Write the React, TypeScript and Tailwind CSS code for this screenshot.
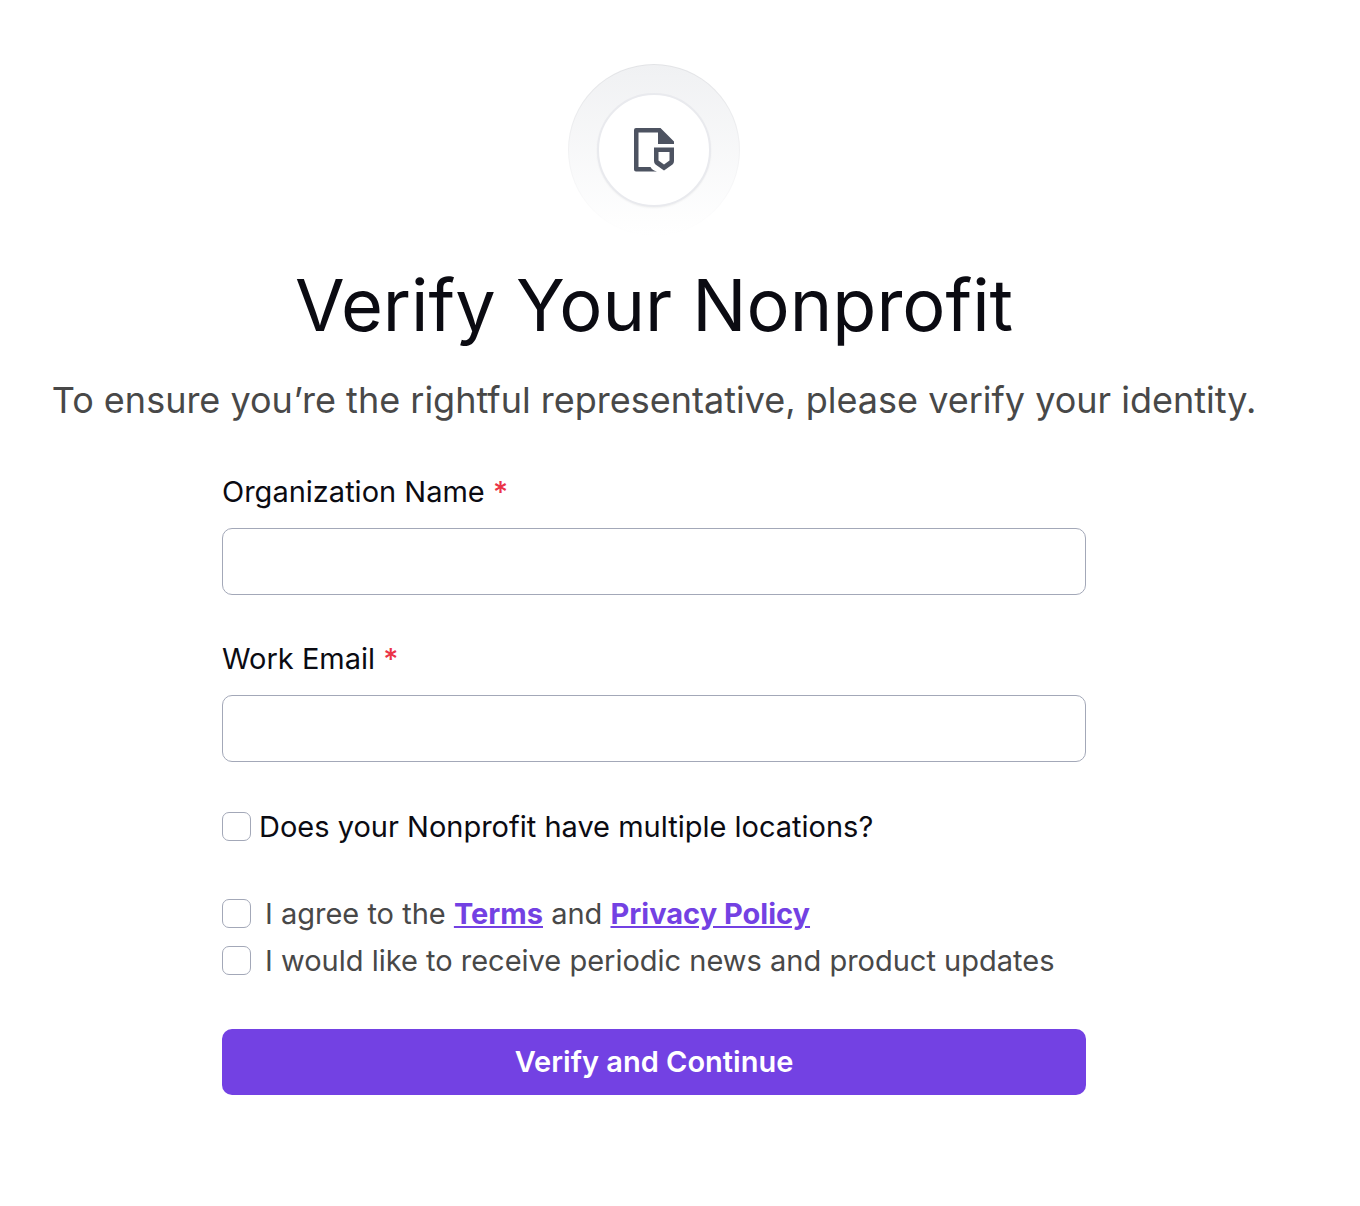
import type { ReactNode } from "react";

function Field({ id, label, type }: { id: string; label: string; type: string }) {
  return (
    <div className="flex flex-col gap-4">
      <label htmlFor={id} className="text-[29px] leading-10 text-[#0b0b12]">
        {label} <span className="font-medium text-[#eb3347]">*</span>
      </label>
      <input id={id} type={type} required className="h-[67px] w-full rounded-[10px] border border-[#a3a8b8] bg-white px-5 text-[29px] outline-none" />
    </div>
  );
}

function Check({ id, gap, children }: { id: string; gap: string; children: ReactNode }) {
  return (
    <div className={`flex items-center ${gap}`}>
      <input id={id} type="checkbox" className="size-[29px] shrink-0 appearance-none rounded-[7px] border border-[#a3a8b8] bg-white checked:bg-[#7341e3]" />
      <label htmlFor={id} className="text-[29px] leading-[47px]">{children}</label>
    </div>
  );
}

function DocumentShieldIcon() {
  return (
    <svg width="44" height="46" viewBox="0 0 44 46" fill="#4d5361" fillRule="evenodd" aria-hidden="true">
      <path d="M4 1H28.5L42 14.5V17H26V5.5H6.5V40H18.5Q20 43 25 44.5H4Q2 44.5 2 42.5V3Q2 1 4 1Z" />
      <path d="M22 20.5H42V34Q42 36 40.5 37.5L32 43.5L23.5 37.5Q22 36 22 34ZM26.5 25V33.5L32 37.5L37.5 33.5V25Z" />
    </svg>
  );
}

export default function App() {
  return (
    <main className="min-h-screen bg-white pt-16 pr-[52px] font-['Inter',sans-serif]">
      <div className="flex flex-col items-center">
        <div className="rounded-full bg-linear-to-b from-[#e2e3e6] to-white p-px">
          <div className="flex size-[170px] items-center justify-center rounded-full bg-linear-to-b from-[#f0f1f3] to-white">
            <div className="flex size-[114px] items-center justify-center rounded-full border-2 border-[#e9eaee] bg-white shadow-xs">
              <DocumentShieldIcon />
            </div>
          </div>
        </div>
        <h1 className="mt-6 text-center text-[72px] leading-[90px] text-[#0b0b12]">Verify Your Nonprofit</h1>
        <p className="mt-7 text-center text-[36px] leading-[44px] text-[#484848]">To ensure you’re the rightful representative, please verify your identity.</p>
        <form className="mt-[50px] flex w-full max-w-[864px] flex-col">
          <Field id="org" label="Organization Name" type="text" />
          <div className="mt-11">
            <Field id="email" label="Work Email" type="email" />
          </div>
          <div className="mt-[41px] text-[#0b0b12]">
            <Check id="multi" gap="gap-2">Does your Nonprofit have multiple locations?</Check>
          </div>
          <div className="mt-10 text-[#484848]">
            <Check id="terms" gap="gap-3.5">
              I agree to the <a href="#terms" className="font-bold text-[#7341e3] underline">Terms</a> and <a href="#privacy" className="font-bold text-[#7341e3] underline">Privacy Policy</a>
            </Check>
            <Check id="news" gap="gap-3.5">I would like to receive periodic news and product updates</Check>
          </div>
          <button type="submit" className="mt-[45px] h-[66px] rounded-[10px] bg-[#7341e3] text-[29px] font-semibold text-white">Verify and Continue</button>
        </form>
      </div>
    </main>
  );
}
